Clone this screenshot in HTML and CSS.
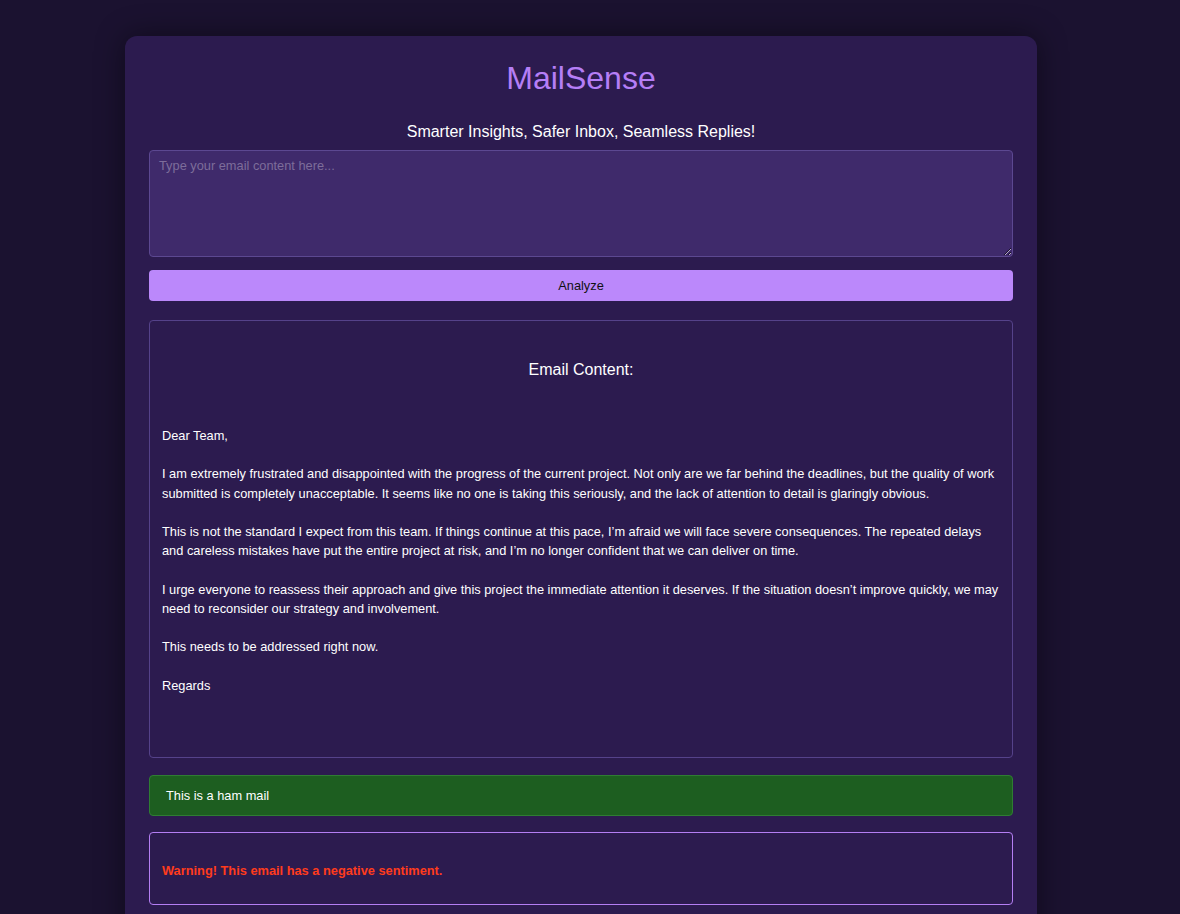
FILE: index.html
```html
<!DOCTYPE html>
<html lang="en">
<head>
<meta charset="utf-8">
<title>MailSense</title>
<link rel="stylesheet" href="styles.css">
</head>
<body>
<div class="app">
  <h1 class="title">MailSense</h1>
  <p class="tagline">Smarter Insights, Safer Inbox, Seamless Replies!</p>
  <textarea class="input" placeholder="Type your email content here..."></textarea>
  <button class="analyze">Analyze</button>
  <div class="email-box">
    <h3 class="email-heading">Email Content:</h3>
    <div class="email-text">Dear Team,

I am extremely frustrated and disappointed with the progress of the current project. Not only are we far behind the deadlines, but the quality of work submitted is completely unacceptable. It seems like no one is taking this seriously, and the lack of attention to detail is glaringly obvious.

This is not the standard I expect from this team. If things continue at this pace, I’m afraid we will face severe consequences. The repeated delays and careless mistakes have put the entire project at risk, and I’m no longer confident that we can deliver on time.

I urge everyone to reassess their approach and give this project the immediate attention it deserves. If the situation doesn’t improve quickly, we may need to reconsider our strategy and involvement.

This needs to be addressed right now.

Regards</div>
  </div>
  <div class="ham">This is a ham mail</div>
  <div class="sentiment">
    <p class="warning">Warning! This email has a negative sentiment.</p>
  </div>
</div>
</body>
</html>
```

FILE: styles.css
```css
html, body {
  height: 100%;
}
body {
  margin: 0;
  padding: 36px 18px 0 0;
  background: #1b1230;
  font-family: "Liberation Sans", Arial, sans-serif;
  color: #ffffff;
  overflow: hidden;
}
.app {
  width: 912px;
  box-sizing: border-box;
  margin: 0 auto;
  padding: 24px 24px 40px;
  background: #2c1b4f;
  border-radius: 12px;
  box-shadow: 0 0 30px rgba(0, 0, 0, 0.45);
  display: flex;
  flex-direction: column;
  min-height: 1000px;
}
.title {
  margin: 0 0 26px;
  font-size: 32px;
  font-weight: normal;
  line-height: 37px;
  text-align: center;
  color: #b57ef6;
}
.tagline {
  margin: 0 0 9px;
  font-size: 16px;
  line-height: 18px;
  text-align: center;
  color: #ffffff;
}
.input {
  display: block;
  box-sizing: border-box;
  width: 100%;
  height: 107px;
  margin: 0 0 13px;
  padding: 7px 9px;
  background: #3f2a6b;
  border: 1px solid #5c4891;
  border-radius: 4px;
  color: #ffffff;
  font-family: "Liberation Sans", Arial, sans-serif;
  font-size: 12.8px;
  resize: vertical;
}
.input::placeholder {
  color: #7d6d9a;
}
.analyze {
  display: block;
  width: 100%;
  height: 31px;
  margin: 0 0 19px;
  padding: 0;
  background: #bb88fb;
  border: none;
  border-radius: 4px;
  color: #111111;
  font-family: "Liberation Sans", Arial, sans-serif;
  font-size: 12.8px;
}
.email-box {
  box-sizing: border-box;
  height: 438px;
  padding: 12px;
  border: 1px solid #55428a;
  border-radius: 4px;
  margin-bottom: 17px;
}
.email-heading {
  margin: 28px 0 47px;
  font-size: 16px;
  font-weight: normal;
  line-height: 18px;
  text-align: center;
}
.email-text {
  white-space: pre-wrap;
  font-size: 12.8px;
  line-height: 19.2px;
}
.ham {
  box-sizing: border-box;
  height: 41px;
  padding: 12px 16px;
  background: #1d5e20;
  border: 1px solid #2f7d33;
  border-radius: 4px;
  font-size: 12.8px;
  line-height: 15px;
  margin-bottom: 16px;
}
.sentiment {
  box-sizing: border-box;
  height: 73px;
  padding: 0 12px;
  border: 1px solid #b47ef3;
  border-radius: 4px;
}
.warning {
  margin: 30px 0 0;
  font-size: 12.8px;
  font-weight: bold;
  line-height: 16px;
  color: #ff3b1c;
}
```
